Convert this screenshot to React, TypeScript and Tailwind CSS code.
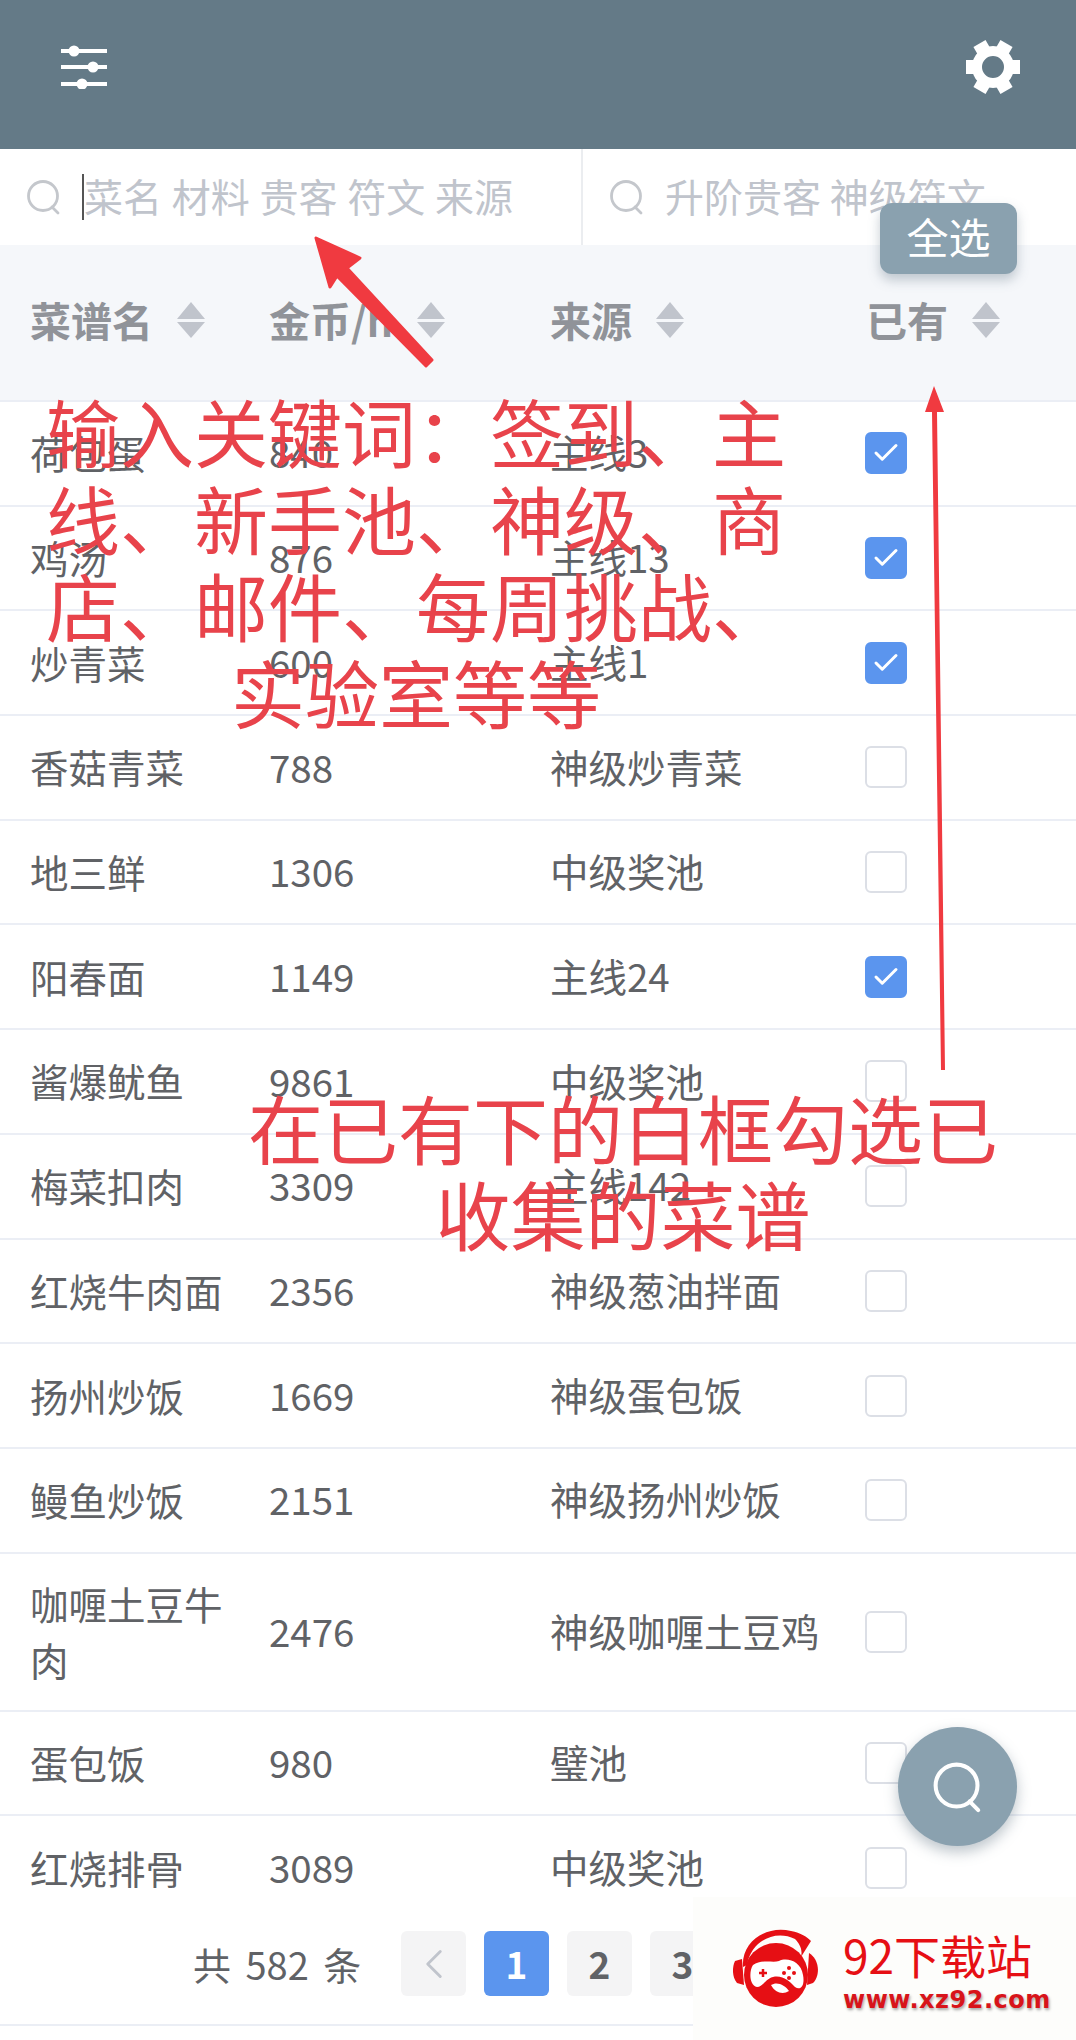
import React from "react";
import { Check, ChevronLeft } from "lucide-react";

const rows = [
  { name: "荷包蛋", gold: "840", source: "主线3", checked: true },
  { name: "鸡汤", gold: "876", source: "主线13", checked: true },
  { name: "炒青菜", gold: "600", source: "主线1", checked: true },
  { name: "香菇青菜", gold: "788", source: "神级炒青菜", checked: false },
  { name: "地三鲜", gold: "1306", source: "中级奖池", checked: false },
  { name: "阳春面", gold: "1149", source: "主线24", checked: true },
  { name: "酱爆鱿鱼", gold: "9861", source: "中级奖池", checked: false },
  { name: "梅菜扣肉", gold: "3309", source: "主线142", checked: false },
  { name: "红烧牛肉面", gold: "2356", source: "神级葱油拌面", checked: false },
  { name: "扬州炒饭", gold: "1669", source: "神级蛋包饭", checked: false },
  { name: "鳗鱼炒饭", gold: "2151", source: "神级扬州炒饭", checked: false },
  { name: "咖喱土豆牛肉", gold: "2476", source: "神级咖喱土豆鸡", checked: false, tall: true },
  { name: "蛋包饭", gold: "980", source: "璧池", checked: false },
  { name: "红烧排骨", gold: "3089", source: "中级奖池", checked: false },
];

const SearchGlyph = ({ className }: { className: string }) => (
  <svg viewBox="0 0 36 36" fill="none" stroke="currentColor" strokeWidth="2.8" strokeLinecap="round" className={className}>
    <circle cx="17" cy="17" r="14.5" />
    <path d="M26 28 L32 34" />
  </svg>
);

const SortCaret = () => (
  <svg viewBox="0 0 30 36" className="h-[36px] w-[30px] shrink-0 fill-[#c0c4cc]">
    <path d="M15 0 L29 17 L1 17 Z" />
    <path d="M15 36 L29 20 L1 20 Z" />
  </svg>
);

const HeadCell = ({ label }: { label: string }) => (
  <div className="flex items-center gap-[23px] pl-[30px]">
    <span className="text-[41px] font-bold text-[#909399]">{label}</span>
    <SortCaret />
  </div>
);

const Gear = () => (
  <svg viewBox="0 0 56 56" className="h-[56px] w-[56px] fill-white">
    <circle cx="28" cy="28" r="16" fill="none" stroke="white" strokeWidth="10" />
    {[0, 60, 120, 180, 240, 300].map((deg) => (
      <rect key={deg} x="21" y="1" width="14" height="12" transform={`rotate(${deg + 30} 28 28)`} />
    ))}
  </svg>
);

const Sliders = () => (
  <svg viewBox="0 0 46 44" className="h-[44px] w-[46px]" fill="white" stroke="white">
    <path d="M0 6 H46 M0 22 H46 M0 39 H46" strokeWidth="4" />
    <circle cx="13" cy="6" r="5.5" stroke="none" />
    <circle cx="32" cy="22" r="5.5" stroke="none" />
    <circle cx="21" cy="39" r="5.5" stroke="none" />
  </svg>
);

const Logo = () => (
  <svg viewBox="0 0 96 84" className="h-[84px] w-[96px]">
    <path d="M14 42 C12 16 38 0 62 6 C72 8 78 12 82 16 L72 32 C74 24 70 18 66 14 C46 4 22 16 18 40 Z" fill="#e60f14" />
    <circle cx="47" cy="50" r="32" fill="#e60f14" />
    <path d="M6 36 L13 34 L15 60 L8 58 C3 52 3 42 6 36 Z" fill="#e60f14" />
    <path d="M80 28 C90 34 92 50 84 58 L78 60 Z" fill="#e60f14" />
    <path d="M24 40 C32 34 44 38 50 36 C58 32 72 36 74 50 C76 60 72 66 66 62 C60 56 54 50 44 52 C36 54 34 62 28 62 C20 60 20 46 24 40 Z" fill="white" />
    <path d="M30 48 H38 M34 44 V52" stroke="#e60f14" strokeWidth="2.5" />
    <circle cx="60" cy="43" r="2" fill="#e60f14" />
    <circle cx="65" cy="48" r="2" fill="#e60f14" />
    <circle cx="55" cy="48" r="2" fill="#e60f14" />
    <circle cx="60" cy="53" r="2" fill="#e60f14" />
    <path d="M42 60 C48 56 56 60 60 66 C54 70 46 68 42 60 Z" fill="white" />
  </svg>
);

export default function App() {
  return (
    <div className="relative h-[2040px] w-[1076px] overflow-hidden bg-white font-['Noto_Sans_CJK_SC','Noto_Sans',sans-serif]">
      {/* Top bar */}
      <header className="flex h-[149px] items-center justify-between bg-[#647a87] pb-[15px] pl-[61px] pr-[55px]">
        <Sliders />
        <Gear />
      </header>

      {/* Search */}
      <div className="grid h-[96px] grid-cols-[583px_1fr] items-center overflow-hidden">
        <div className="flex h-full items-center border-r-2 border-[#ebedf0] pl-[26px]">
          <SearchGlyph className="h-[36px] w-[36px] text-[#c4c7cc]" />
          <span className="ml-[20px] h-[46px] w-[2px] bg-[#555]" />
          <span className="mb-[3px] whitespace-nowrap text-[39px] text-[#c0c4cc] [word-spacing:1px]">菜名 材料 贵客 符文 来源</span>
        </div>
        <div className="flex h-full items-center pl-[26px]">
          <SearchGlyph className="h-[36px] w-[36px] text-[#c4c7cc]" />
          <span className="mb-[3px] ml-[20px] whitespace-nowrap text-[39px] text-[#c0c4cc]">升阶贵客 神级符文</span>
        </div>
      </div>

      {/* Table head */}
      <div className="grid h-[157px] grid-cols-[239px_281px_316px_240px] items-center border-b-2 border-[#ebeef5] bg-[#f5f7fa] pb-[6px]">
        <HeadCell label="菜谱名" />
        <HeadCell label="金币/h" />
        <HeadCell label="来源" />
        <HeadCell label="已有" />
      </div>

      {/* Table body */}
      <div className="h-[1501px] overflow-hidden">
        {rows.map((row) => (
          <div
            key={row.name}
            className={`grid grid-cols-[239px_281px_316px_240px] items-center border-b-2 border-[#ebeef5] text-[#606266] ${
              row.tall ? "h-[158px]" : "h-[104.7px]"
            }`}
          >
            <div className="mb-[2px] pl-[30px] pr-[8px] text-[38.5px] leading-[56px]">{row.name}</div>
            <div className="mb-[2px] pl-[30px] text-[38.5px]">{row.gold}</div>
            <div className="mb-[2px] pl-[30px] text-[38.5px]">{row.source}</div>
            <div className="pl-[29px]">
              <div
                className={`flex h-[42px] w-[42px] items-center justify-center rounded-[6px] border-2 ${
                  row.checked ? "border-[#5b95ee] bg-[#5b95ee]" : "border-[#dcdfe6] bg-white"
                }`}
              >
                {row.checked && <Check size={30} strokeWidth={2.4} className="text-white" />}
              </div>
            </div>
          </div>
        ))}
      </div>

      {/* Pagination */}
      <div className="flex h-[123px] items-center border-b-2 border-[#ebeef5] pl-[193px]">
        <span className="w-[208px] text-[38px] text-[#606266] [word-spacing:6px]">共 582 条</span>
        <div className="flex gap-[18px]">
          <div className="flex h-[65px] w-[65px] items-center justify-center rounded-[6px] bg-[#f4f4f5] text-[#c0c4cc]">
            <ChevronLeft size={50} strokeWidth={1.4} />
          </div>
          <div className="flex h-[65px] w-[65px] items-center justify-center rounded-[6px] bg-[#5b95ee] text-[37px] font-bold text-white">1</div>
          <div className="flex h-[65px] w-[65px] items-center justify-center rounded-[6px] bg-[#f4f4f5] text-[37px] font-bold text-[#606266]">2</div>
          <div className="flex h-[65px] w-[65px] items-center justify-center rounded-[6px] bg-[#f4f4f5] text-[37px] font-bold text-[#606266]">3</div>
        </div>
      </div>

      {/* Annotations drawn on the screenshot */}
      <svg viewBox="0 0 1076 2040" className="pointer-events-none absolute left-0 top-0 h-[2040px] w-[1076px]">
        <path d="M316 238 L360 258 L347 268 L432 360 L426 366 L337 276 L330 287 Z" fill="#f03a40" stroke="#f03a40" strokeWidth="3" strokeLinejoin="round" />
        <path d="M934 386 L944 412 L937 412 L945 1070 L941 1070 L932 412 L925 412 Z" fill="#f03a40" />
      </svg>
      <div className="absolute left-[36px] top-[386px] w-[760px] text-center text-[74px] leading-[87px] text-[#e8434b]">
        输入关键词：签到、主
        <br />
        线、新手池、神级、商
        <br />
        店、邮件、每周挑战、
        <br />
        实验室等等
      </div>
      <div className="absolute left-[248px] top-[1084px] w-[750px] text-center text-[75px] leading-[86px] text-[#e8434b]">
        在已有下的白框勾选已
        <br />
        收集的菜谱
      </div>

      {/* Floating buttons */}
      <div className="absolute left-[880px] top-[203px] flex h-[71px] w-[137px] items-center justify-center rounded-[12px] bg-[#8aa1af] pb-[6px] text-[42px] text-white shadow-[0_6px_12px_rgba(90,110,125,0.35)]">
        全选
      </div>
      <div className="absolute left-[898px] top-[1727px] flex h-[119px] w-[119px] items-center justify-center rounded-full bg-[#8aa1af] shadow-[0_6px_14px_rgba(90,110,125,0.4)]">
        <SearchGlyph className="h-[52px] w-[52px] text-white" />
      </div>

      {/* Watermark */}
      <div className="absolute left-[693px] top-[1897px] flex h-[143px] w-[383px] items-center bg-[#fdfdfb] pb-[4px] pl-[36px]">
        <Logo />
        <div className="ml-[18px] mt-[15px] flex flex-col items-start">
          <span className="whitespace-nowrap text-[46px] leading-[52px] text-[#e60f14]">92下载站</span>
          <span className="whitespace-nowrap font-['DejaVu_Sans',sans-serif] text-[24px] font-bold leading-[40px] tracking-[0.5px] text-[#d8141a] [text-shadow:1px_2px_3px_rgba(0,0,0,0.35)]">
            www.xz92.com
          </span>
        </div>
      </div>
    </div>
  );
}
